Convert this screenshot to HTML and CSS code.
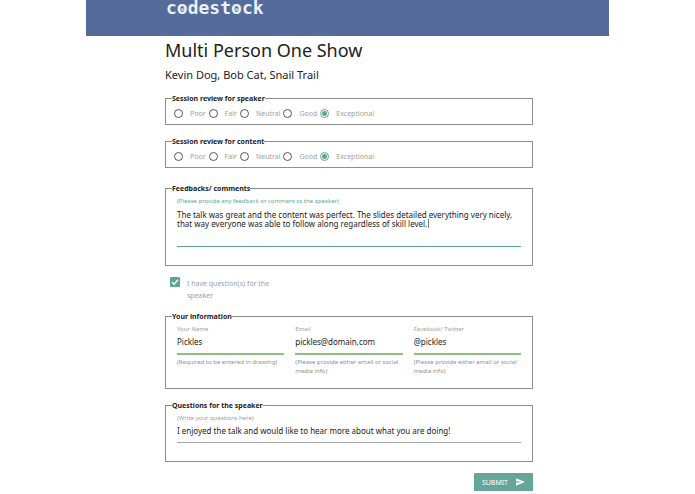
FILE: index.html
```html
<!DOCTYPE html>
<html lang="en">
<head>
    <meta charset="UTF-8">
    <meta name="viewport" content="width=device-width, initial-scale=1.0">
    <title>Session Review - Codestock</title>
    <link rel="stylesheet" href="styles.css">
</head>
<body>
    <div class="page">
        <header class="banner">
            <div class="logo">c<span class="gear">o</span>dest<span class="gear">o</span>ck</div>
        </header>

        <form class="review-form">
            <h1>Multi Person One Show</h1>
            <h2>Kevin Dog, Bob Cat, Snail Trail</h2>

            <fieldset>
                <legend>Session review for speaker</legend>
                <div class="rating">
                    <label><input type="radio" name="speaker" value="1">Poor</label>
                    <label><input type="radio" name="speaker" value="2">Fair</label>
                    <label><input type="radio" name="speaker" value="3">Neutral</label>
                    <label><input type="radio" name="speaker" value="4">Good</label>
                    <label><input type="radio" name="speaker" value="5" checked>Exceptional</label>
                </div>
            </fieldset>

            <fieldset>
                <legend>Session review for content</legend>
                <div class="rating">
                    <label><input type="radio" name="content" value="1">Poor</label>
                    <label><input type="radio" name="content" value="2">Fair</label>
                    <label><input type="radio" name="content" value="3">Neutral</label>
                    <label><input type="radio" name="content" value="4">Good</label>
                    <label><input type="radio" name="content" value="5" checked>Exceptional</label>
                </div>
            </fieldset>

            <fieldset class="feedback">
                <legend>Feedbacks/ comments</legend>
                <div class="field active">
                    <label for="feedback">(Please provide any feedback or comment to the speaker)</label>
                    <textarea id="feedback">The talk was great and the content was perfect. The slides detailed everything very nicely,
that way everyone was able to follow along regardless of skill level.</textarea>
                    <span class="caret"></span>
                </div>
            </fieldset>

            <div class="question-toggle">
                <input type="checkbox" id="hasQuestions" checked>
                <label for="hasQuestions">I have question(s) for the speaker</label>
            </div>

            <fieldset class="info">
                <legend>Your information</legend>
                <div class="columns">
                    <div class="field valid">
                        <label for="name">Your Name</label>
                        <input type="text" id="name" value="Pickles">
                        <p class="help">(Required to be entered in drawing)</p>
                    </div>
                    <div class="field valid">
                        <label for="email">Email</label>
                        <input type="text" id="email" value="pickles@domain,com">
                        <p class="help">(Please provide either email or social media info)</p>
                    </div>
                    <div class="field valid">
                        <label for="social">Facebook/ Twitter</label>
                        <input type="text" id="social" value="@pickles">
                        <p class="help">(Please provide either email or social media info)</p>
                    </div>
                </div>
            </fieldset>

            <fieldset class="questions">
                <legend>Questions for the speaker</legend>
                <div class="field">
                    <label for="questions">(Write your questions here)</label>
                    <input type="text" id="questions" value="I enjoyed the talk and would like to hear more about what you are doing!">
                </div>
            </fieldset>

            <div class="actions">
                <button type="submit">
                    SUBMIT
                    <svg viewBox="2 3 21 18" width="9" height="8"><path fill="currentColor" d="M2 21l21-9L2 3v7l15 2-15 2z"/></svg>
                </button>
            </div>
        </form>
    </div>
</body>
</html>
```

FILE: styles.css
```css
* {
    box-sizing: border-box;
}

body {
    margin: 0;
    background-color: #fff;
    color: #222;
    font-family: "Noto Sans", sans-serif;
    font-size: 8px;
}

.page {
    margin: 0 86px;
}

.banner {
    height: 36px;
    padding: 0 80px;
    background-color: #546b9b;
}

.logo {
    color: #e8f0fb;
    font-family: "DejaVu Sans Mono", monospace;
    font-size: 18px;
    font-weight: bold;
    line-height: 16px;
}

.gear {
    position: relative;
}

/* hub in the middle of each o */
.gear::after {
    content: "";
    position: absolute;
    left: 4px;
    top: 11px;
    width: 3px;
    height: 3px;
    border-radius: 50%;
    background-color: #b9c9e6;
}

.review-form {
    padding: 0 76px 0 79px;
}

h1 {
    margin: 0;
    font-size: 18px;
    font-weight: normal;
    line-height: 28px;
}

h2 {
    margin: 0 0 7px;
    font-size: 11px;
    font-weight: normal;
    line-height: 22px;
}

fieldset {
    min-width: 0;
    margin: 0 0 11px;
    padding: 0 6px;
    border: 1px solid #8e8e8e;
}

legend {
    padding: 1px 0 0;
    font-size: 7px;
    font-weight: bold;
    line-height: 10px;
}

.rating {
    display: flex;
    gap: 3px;
    padding: 0 2px 2px;
    height: 20px;
    color: #a0a0a0;
    font-size: 7px;
}

.rating label {
    display: flex;
    align-items: center;
    gap: 7px;
}

input[type="radio"] {
    appearance: none;
    width: 9px;
    height: 9px;
    margin: 0;
    border: 1px solid #555;
    border-radius: 50%;
}

input[type="radio"]:checked {
    border-color: #5fa595;
    background: radial-gradient(circle, #5fa595 2px, #fff 3px);
}

.field {
    position: relative;
    flex: 1;
    min-width: 0;
    padding: 2px 5px 0;
}

.field label {
    display: block;
    color: #a0a0a0;
    font-size: 6px;
    line-height: 10px;
}

.field input,
.field textarea {
    display: block;
    width: 100%;
    height: 20px;
    padding: 0 0 4px;
    border: none;
    border-bottom: 1px solid #aaa;
    outline: none;
    background: none;
    color: #222;
    font: inherit;
}

.field.active label {
    color: #5fa595;
}

.field.active textarea {
    height: 41px;
    padding-top: 4px;
    border-bottom-color: #5fa595;
    line-height: 9px;
    resize: none;
    overflow: hidden;
}

.caret {
    position: absolute;
    left: 256px;
    top: 25px;
    width: 1px;
    height: 9px;
    background-color: #777;
}

.feedback {
    margin-top: 15px;
    padding-bottom: 18px;
}

.question-toggle {
    display: flex;
    align-items: flex-start;
    gap: 7px;
    margin-bottom: 9px;
    padding-left: 5px;
}

.question-toggle label {
    width: 96px;
    padding-top: 1px;
    color: #a0a0a0;
    font-size: 7px;
    line-height: 12px;
}

input[type="checkbox"] {
    appearance: none;
    width: 10px;
    height: 10px;
    margin: 0;
    border-radius: 1px;
    background: #5fa595 url('data:image/svg+xml,<svg xmlns="http://www.w3.org/2000/svg" viewBox="0 0 10 10"><path d="M2 5.2l2 2 4-4.4" fill="none" stroke="white" stroke-width="1.3"/></svg>');
}

.columns {
    display: flex;
    gap: 1px;
}

.field.valid input {
    height: 21px;
    border-bottom: 2px solid #8fbf7f;
}

.help {
    margin: 3px 0 0;
    color: #8f8f8f;
    font-size: 6px;
    line-height: 9px;
}

.info {
    padding-bottom: 12px;
}

.questions {
    padding-bottom: 18px;
}

.actions {
    display: flex;
    justify-content: flex-end;
}

button {
    display: flex;
    align-items: center;
    gap: 8px;
    height: 18px;
    padding: 0 8px;
    border: none;
    border-radius: 1px;
    background-color: #66a699;
    box-shadow: 0 1px 1px rgba(0, 0, 0, 0.2);
    color: #fff;
    font-family: inherit;
    font-size: 7px;
    cursor: pointer;
}
```
